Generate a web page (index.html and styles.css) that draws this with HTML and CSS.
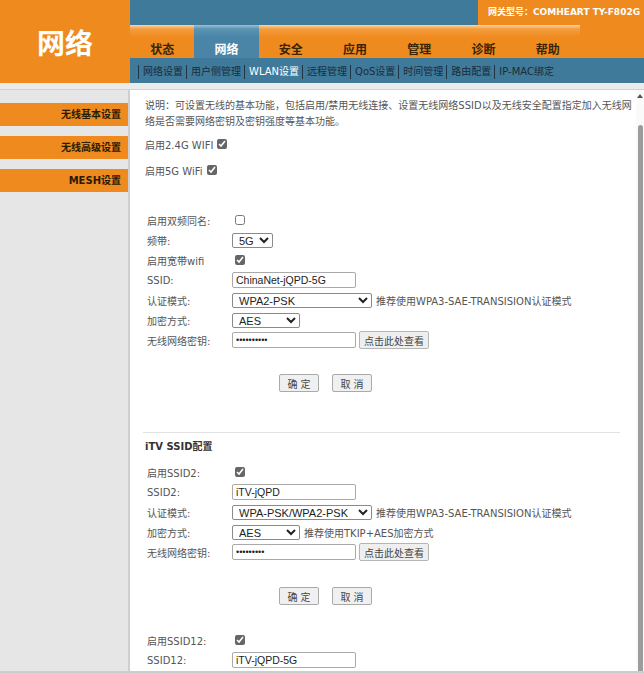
FILE: index.html
```html
<!DOCTYPE html>
<html lang="zh-CN">
<head>
<meta charset="utf-8">
<title>网络</title>
<link rel="stylesheet" href="styles.css">
</head>
<body>
<div class="page">
  <header class="header">
    <div class="logo">网络</div>
    <div class="head-main">
      <div class="topbar">
        <div class="topbar-fill"></div>
        <div class="model">网关型号：COMHEART TY-F802G</div>
      </div>
      <div class="tabrow">
        <nav class="tabs">
          <span class="tab">状态</span>
          <span class="tab active">网络</span>
          <span class="tab">安全</span>
          <span class="tab">应用</span>
          <span class="tab">管理</span>
          <span class="tab">诊断</span>
          <span class="tab">帮助</span>
        </nav>
        <div class="tab-end"></div>
      </div>
      <nav class="subnav">
        <span class="sub">网络设置</span>
        <span class="sub">用户侧管理</span>
        <span class="sub active">WLAN设置</span>
        <span class="sub">远程管理</span>
        <span class="sub">QoS设置</span>
        <span class="sub">时间管理</span>
        <span class="sub">路由配置</span>
        <span class="sub">IP-MAC绑定</span>
      </nav>
    </div>
  </header>
  <div class="gap"></div>
  <div class="body">
    <aside class="side">
      <div class="side-item">无线基本设置</div>
      <div class="side-item">无线高级设置</div>
      <div class="side-item">MESH设置</div>
    </aside>
    <main class="content">
      <p class="desc">说明：可设置无线的基本功能，包括启用/禁用无线连接、设置无线网络SSID以及无线安全配置指定加入无线网<br>络是否需要网络密钥及密钥强度等基本功能。</p>
      <div class="wifi-row wifi-24">启用2.4G WIFI<input type="checkbox" class="cb cb-wifi" checked></div>
      <div class="wifi-row wifi-5">启用5G WiFi<input type="checkbox" class="cb cb-wifi" checked></div>

      <div class="form form-first">
        <div class="row"><span class="lbl">启用双频同名:</span><input type="checkbox" class="cb"></div>
        <div class="row"><span class="lbl">频带:</span><select class="sel sel-band"><option>5G</option></select></div>
        <div class="row"><span class="lbl">启用宽带wifi</span><input type="checkbox" class="cb" checked></div>
        <div class="row"><span class="lbl">SSID:</span><input type="text" class="txt" value="ChinaNet-jQPD-5G"></div>
        <div class="row"><span class="lbl">认证模式:</span><select class="sel sel-auth"><option>WPA2-PSK</option></select><span class="hint">推荐使用WPA3-SAE-TRANSISION认证模式</span></div>
        <div class="row"><span class="lbl">加密方式:</span><select class="sel sel-enc"><option>AES</option></select></div>
        <div class="row"><span class="lbl">无线网络密钥:</span><input type="password" class="txt pwd" value="abcdefghij"><button class="view-btn">点击此处查看</button></div>
      </div>
      <div class="actions actions-first"><button class="btn">确定</button><button class="btn">取消</button></div>

      <hr class="divider">
      <h3 class="section-title">iTV SSID配置</h3>

      <div class="form form-itv">
        <div class="row"><span class="lbl">启用SSID2:</span><input type="checkbox" class="cb" checked></div>
        <div class="row"><span class="lbl">SSID2:</span><input type="text" class="txt" value="iTV-jQPD"></div>
        <div class="row"><span class="lbl">认证模式:</span><select class="sel sel-auth"><option>WPA-PSK/WPA2-PSK</option></select><span class="hint">推荐使用WPA3-SAE-TRANSISION认证模式</span></div>
        <div class="row"><span class="lbl">加密方式:</span><select class="sel sel-enc"><option>AES</option></select><span class="hint">推荐使用TKIP+AES加密方式</span></div>
        <div class="row"><span class="lbl">无线网络密钥:</span><input type="password" class="txt pwd" value="abcdefghi"><button class="view-btn">点击此处查看</button></div>
      </div>
      <div class="actions actions-itv"><button class="btn">确定</button><button class="btn">取消</button></div>

      <div class="form form-12">
        <div class="row"><span class="lbl">启用SSID12:</span><input type="checkbox" class="cb" checked></div>
        <div class="row"><span class="lbl">SSID12:</span><input type="text" class="txt" value="iTV-jQPD-5G"></div>
      </div>
    </main>
    <div class="scroll">
      <span class="scroll-up"></span>
      <span class="scroll-thumb"></span>
    </div>
  </div>
</div>
</body>
</html>
```
FILE: styles.css
```css
* { box-sizing: border-box; }
html, body { margin: 0; padding: 0; }
body {
  font-family: "DejaVu Sans", "Noto Sans CJK SC", sans-serif;
  font-size: 10px;
  color: #555;
  background: #fff;
}
.page {
  width: 644px;
  height: 673px;
  overflow: hidden;
  display: flex;
  flex-direction: column;
}

/* header */
.header { display: flex; height: 83px; flex: none; }
.logo {
  width: 130px;
  background: #ef8a1e;
  color: #fff;
  font-family: "Noto Sans CJK SC", sans-serif;
  font-weight: bold;
  font-size: 28px;
  display: flex;
  align-items: center;
  justify-content: center;
}
.head-main { flex: 1; display: flex; flex-direction: column; background: #3f7a9a; }
.topbar { height: 25px; display: flex; }
.topbar-fill { flex: 1; }
.model {
  width: 166px;
  background: #ef8a1e;
  color: #fff;
  font-weight: bold;
  font-size: 9px;
  padding: 0 0 3px 10px;
  display: flex;
  align-items: center;
}
.tabrow { height: 33px; display: flex; }
.tabs { width: 450px; display: flex; }
.tab {
  flex: 1;
  background: linear-gradient(#fbd3a4, #f39d3e 4px, #ef8a1e 12px);
  font-family: "Noto Sans CJK SC", sans-serif;
  font-weight: bold;
  font-size: 12px;
  color: #3a2606;
  text-align: center;
  padding-top: 15px;
  line-height: 17px;
}
.tab.active {
  background: linear-gradient(#9cc0d4, #5b93b3 4px, #4a85a7 12px);
  color: #fff;
}
.tab-end { flex: 1; background: #ef8a1e; }
.subnav {
  height: 25px;
  display: flex;
  align-items: center;
  padding: 2px 0 0 8px;
  color: #1b2c38;
}
.sub { border-left: 1px solid #1f3545; padding: 0 3px 0 4px; line-height: 14px; }
.sub.active { color: #fff; }

.gap { height: 6px; background: #ebebeb; flex: none; }

/* body */
.body {
  flex: 1;
  display: flex;
  min-height: 0;
  border-top: 1px solid #d2d2d2;
  border-bottom: 2px solid #cdcdcd;
}
.side {
  width: 128px;
  flex: none;
  background: #e6e6e6;
  padding-top: 13px;
  display: flex;
  flex-direction: column;
  gap: 10px;
}
.side-item {
  height: 23px;
  line-height: 23px;
  background: #ef8a1e;
  color: #2a1a04;
  font-weight: bold;
  text-align: right;
  padding-right: 7px;
}
.content {
  width: 508px;
  flex: none;
  border-left: 2px solid #cfcfcf;
  padding-left: 15px;
  overflow: hidden;
  background: #fff;
}
.desc { margin: 8px 0 0; line-height: 16px; white-space: nowrap; }
.wifi-row { height: 20px; display: flex; align-items: center; }
.wifi-24 { margin-top: 4px; }
.wifi-5 { margin-top: 6px; }
.cb {
  width: 10px;
  height: 10px;
  margin: 0 0 0 3px;
  accent-color: #666;
}
.cb-wifi { margin-left: 4px; }

.form { padding-left: 2px; }
.form-first { margin-top: 30px; }
.form-itv { margin-top: 7px; }
.form-12 { margin-top: 25px; }
.row { height: 20px; display: flex; align-items: center; }
.lbl { width: 85px; flex: none; }
.txt {
  width: 124px;
  height: 16px;
  border: 1px solid #a9a9a9;
  border-radius: 2px;
  font-family: "Liberation Sans", sans-serif;
  font-size: 10.5px;
  padding: 0 3px;
  color: #222;
  background: #fff;
}
.pwd { font-size: 9px; }
.sel {
  height: 15px;
  border: 1px solid #8a8a8a;
  border-radius: 2px;
  font-family: "Liberation Sans", sans-serif;
  font-size: 11px;
  padding: 0 0 0 2px;
  color: #222;
  background: #fff;
}
.sel-band { width: 41px; }
.sel-auth { width: 140px; }
.sel-enc { width: 68px; }
.hint { margin-left: 4px; white-space: nowrap; }
.view-btn {
  margin-left: 3px;
  width: 70px;
  height: 18px;
  padding: 0;
  font-family: "Noto Sans CJK SC", sans-serif;
  font-size: 10px;
  color: #444;
  border: 1px solid #b5b5b5;
  border-radius: 2px;
  background: #efefef;
}
.actions { display: flex; gap: 13px; padding-left: 134px; }
.actions-first { margin-top: 24px; }
.actions-itv { margin-top: 25px; }
.btn {
  width: 40px;
  height: 18px;
  padding: 0 0 0 3px;
  font-family: "Noto Sans CJK SC", sans-serif;
  font-size: 10px;
  letter-spacing: 3px;
  color: #444;
  border: 1px solid #aaa;
  border-radius: 2px;
  background: #f0f0f0;
}
.divider {
  margin: 40px 0 0 -2px;
  width: 477px;
  height: 0;
  border: 0;
  border-top: 1px solid #e2e2e2;
}
.section-title {
  margin: 6px 0 0;
  font-size: 10px;
  font-weight: bold;
  line-height: 16px;
  color: #333;
}

/* scrollbar */
.scroll {
  width: 8px;
  flex: none;
  background: #fafafa;
  display: flex;
  flex-direction: column;
  align-items: center;
}
.scroll-up {
  width: 0;
  height: 0;
  margin-top: 4px;
  border-left: 3px solid transparent;
  border-right: 3px solid transparent;
  border-bottom: 4px solid #555;
}
.scroll-thumb {
  flex: 1;
  width: 5px;
  margin-top: 27px;
  background: #9c9c9c;
  border-radius: 3px 3px 0 0;
}
```
